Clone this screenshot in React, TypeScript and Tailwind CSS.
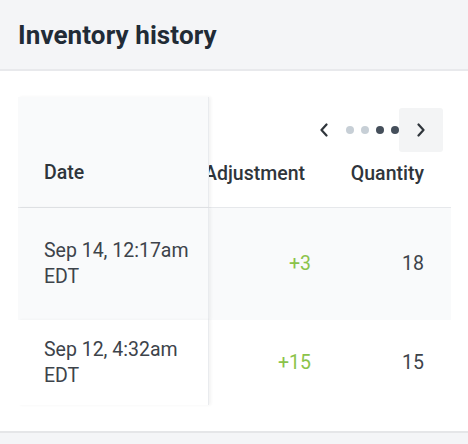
import React from "react";

const font = { fontFamily: "Roboto, 'Noto Sans', sans-serif" };

function ChevronLeft() {
  return (
    <svg width="10" height="14" viewBox="0 0 10 14" fill="none">
      <polyline points="7.5,1.5 2.5,7 7.5,12.5" stroke="#2f353b" strokeWidth="2.2" strokeLinecap="round" strokeLinejoin="round" />
    </svg>
  );
}
function ChevronRight() {
  return (
    <svg width="10" height="14" viewBox="0 0 10 14" fill="none">
      <polyline points="2.5,1.5 7.5,7 2.5,12.5" stroke="#2f353b" strokeWidth="2.2" strokeLinecap="round" strokeLinejoin="round" />
    </svg>
  );
}

const frozen = "w-[191px] shrink-0 border-r border-[#e9ebee] shadow-[2px_0_3px_rgba(0,0,0,0.05)] relative z-10";

export default function App() {
  return (
    <div className="w-[468px] h-[444px] bg-[#f4f5f7] flex flex-col overflow-hidden" style={font}>
      <div className="h-[71px] shrink-0 flex items-center px-[18px] border-b-2 border-[#e8e9ec]">
        <h1 className="text-[26px] font-bold text-[#212b36] leading-none tracking-[0.1px]">Inventory history</h1>
      </div>
      <div className="h-[362px] shrink-0 bg-white border-b-2 border-[#e5e6e8] pt-[26px] pl-[18px] pr-[17px]">
        <div className="flex flex-col text-[19.5px] text-[#3d434a]">
          {/* header row */}
          <div className="flex h-[111px] border-b border-[#e6e8eb]">
            <div className={`${frozen} bg-[#f9fafb] flex flex-col justify-end pb-[21px] pl-[26px]`}>
              <span className="leading-[26px] font-medium text-[#2f353b]">Date</span>
            </div>
            <div className="flex-1 flex flex-col">
              <div className="mt-[11px] h-[44px] flex items-center justify-end pr-[8px]">
                <div className="flex items-center mr-[5px]">
                  <ChevronLeft />
                </div>
                <div className="flex items-center gap-[7px] ml-[12px]">
                  <span className="w-[8px] h-[8px] rounded-full bg-[#c7cfd6]" />
                  <span className="w-[8px] h-[8px] rounded-full bg-[#c7cfd6]" />
                  <span className="w-[8px] h-[8px] rounded-full bg-[#454f5b]" />
                  <span className="w-[8px] h-[8px] rounded-full bg-[#454f5b]" />
                </div>
                <div className="w-[44px] h-[44px] rounded-[3px] bg-[#f3f4f5] flex items-center justify-center">
                  <ChevronRight />
                </div>
              </div>
              <div className="mt-[9px] flex leading-[26px] font-medium text-[#2f353b]">
                <div className="w-[121px] overflow-hidden flex justify-end pr-[25px]">
                  <span className="whitespace-nowrap shrink-0">Adjustment</span>
                </div>
                <div className="flex-1 flex justify-end pr-[27px]">
                  <span className="whitespace-nowrap">Quantity</span>
                </div>
              </div>
            </div>
          </div>
          {/* row 1 */}
          <div className="flex h-[112px] bg-[#f9fafb]">
            <div className={`${frozen} bg-[#f9fafb] flex flex-col justify-center pl-[26px] leading-[26px]`}>
              <span>Sep 14, 12:17am</span>
              <span>EDT</span>
            </div>
            <div className="flex-1 flex items-center leading-[26px]">
              <div className="w-[121px] flex justify-end pr-[19px] text-[#8bc34a]">+3</div>
              <div className="flex-1 flex justify-end pr-[27px]">18</div>
            </div>
          </div>
          {/* row 2 */}
          <div className="flex h-[85px] bg-white">
            <div className={`${frozen} bg-white flex flex-col justify-center pl-[26px] leading-[26px]`}>
              <span>Sep 12, 4:32am</span>
              <span>EDT</span>
            </div>
            <div className="flex-1 flex items-center leading-[26px]">
              <div className="w-[121px] flex justify-end pr-[19px] text-[#8bc34a]">+15</div>
              <div className="flex-1 flex justify-end pr-[27px]">15</div>
            </div>
          </div>
        </div>
      </div>
      <div className="flex-1" />
    </div>
  );
}
